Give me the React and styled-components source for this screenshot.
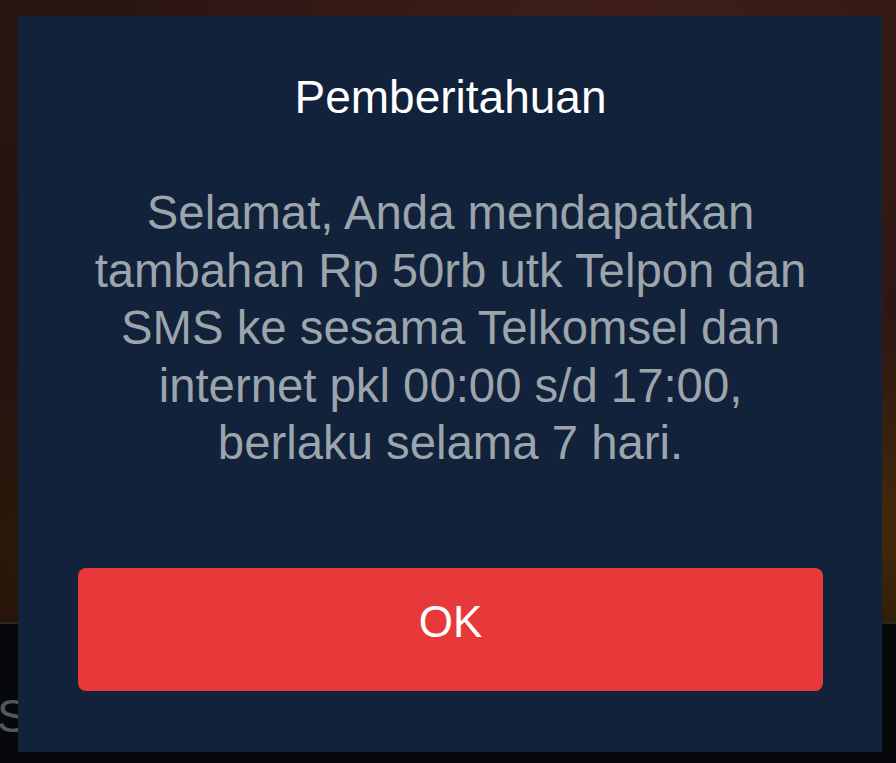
import React from 'react';
import styled, { createGlobalStyle } from 'styled-components';

const Global = createGlobalStyle`
    html, body {
        margin:0;
        padding:0;
        background:#060709;
        font-family:"Liberation Sans", Arial, sans-serif;
        overflow:hidden;
    }
`;

const Screen = styled.div`
    position:relative;
    width:896px;
    height:763px;
    display:flex;
    flex-direction:column;
    overflow:hidden;
`;

const Photo = styled.div`
    height:622px;
    background:
        radial-gradient(ellipse at 70% 20%, rgba(90,40,28,0.55), transparent 60%),
        radial-gradient(ellipse at 95% 85%, rgba(110,70,10,0.5), transparent 30%),
        radial-gradient(ellipse at 5% 90%, rgba(70,40,10,0.4), transparent 30%),
        linear-gradient(180deg, #2a1513 0%, #221210 60%, #1a0d08 100%);
    border-bottom:2px solid #2a2622;
`;

const InfoBar = styled.div`
    flex:1;
    background:#07080b;
    padding-top:64px;
    font-size:46px;
    line-height:56px;
    color:#54585e;
    margin-left:-3px;
    white-space:nowrap;
`;

const Dialog = styled.div`
    position:absolute;
    left:18px;
    top:16px;
    width:864px;
    height:736px;
    box-sizing:border-box;
    background:#11223a;
    display:flex;
    flex-direction:column;
    align-items:center;
    padding:53px 59px 61px 60px;
`;

const Title = styled.h1`
    margin:0;
    font-weight:400;
    font-size:46px;
    line-height:56px;
    color:#ffffff;
    text-align:center;
`;

const Message = styled.p`
    margin:59px 0 0 0;
    font-size:47.3px;
    line-height:57.5px;
    color:#9ca4ac;
    text-align:center;
`;

const OkButton = styled.button`
    margin-top:auto;
    width:100%;
    height:123px;
    border:none;
    border-radius:8px;
    background:#e8393a;
    color:#ffffff;
    font-family:inherit;
    font-size:44px;
    padding:0 0 16px 0;
    cursor:pointer;
`;

function App() {
    const lines = [
        'Selamat, Anda mendapatkan',
        'tambahan Rp 50rb utk Telpon dan',
        'SMS ke sesama Telkomsel dan',
        'internet pkl 00:00 s/d 17:00,',
        'berlaku selama 7 hari.',
    ];
    return (
        <>
        <Global/>
        <Screen>
            <Photo/>
            <InfoBar>Si</InfoBar>
            <Dialog>
                <Title>Pemberitahuan</Title>
                <Message>
                    {lines.map((l, i) => (
                        <React.Fragment key={i}>{l}{i < lines.length - 1 && <br/>}</React.Fragment>
                    ))}
                </Message>
                <OkButton>OK</OkButton>
            </Dialog>
        </Screen>
        </>
    );
}
export default App;
